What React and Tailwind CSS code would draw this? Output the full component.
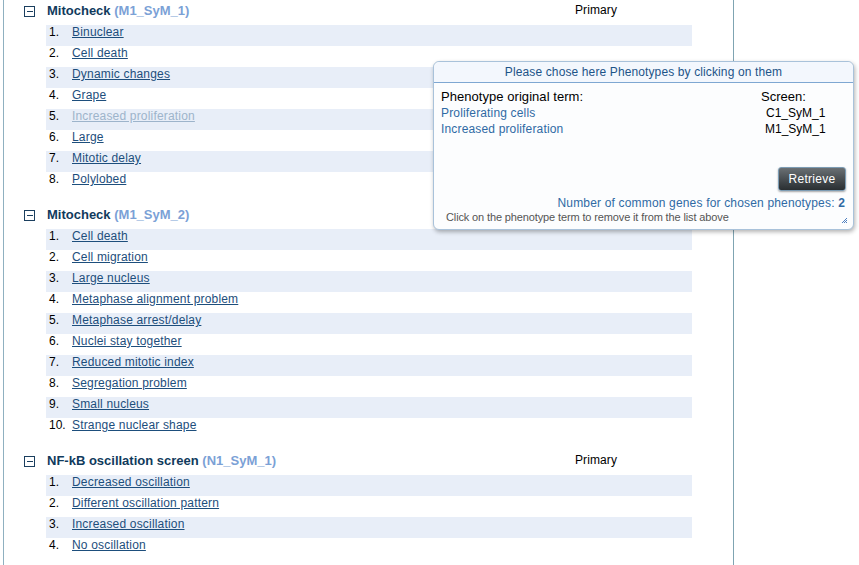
import React from "react";

const sections = [
  {
    title: "Mitocheck",
    code: "M1_SyM_1",
    primary: true,
    items: ["Binuclear", "Cell death", "Dynamic changes", "Grape", "Increased proliferation", "Large", "Mitotic delay", "Polylobed"],
    chosen: ["Increased proliferation"],
  },
  {
    title: "Mitocheck",
    code: "M1_SyM_2",
    primary: false,
    items: [
      "Cell death",
      "Cell migration",
      "Large nucleus",
      "Metaphase alignment problem",
      "Metaphase arrest/delay",
      "Nuclei stay together",
      "Reduced mitotic index",
      "Segregation problem",
      "Small nucleus",
      "Strange nuclear shape",
    ],
    chosen: [],
  },
  {
    title: "NF-kB oscillation screen",
    code: "N1_SyM_1",
    primary: true,
    items: ["Decreased oscillation", "Different oscillation pattern", "Increased oscillation", "No oscillation"],
    chosen: [],
  },
];

function Section({ section }) {
  return (
    <div className="mb-[11px]">
      <div className="flex h-[25px] pl-[20px]">
        <div className="mt-[6px] flex h-[11px] w-[11px] items-center justify-center border border-[#1b3f5f]">
          <div className="h-px w-[6px] bg-[#1b3f5f]" />
        </div>
        <div className="ml-[12px] w-[528px] pt-[4px] text-[13px] font-bold leading-[14px] text-[#103a5c]">
          {section.title} <span className="text-[#7ba1d6]">({section.code})</span>
        </div>
        {section.primary && <div className="pt-[4px] leading-[13px] tracking-[0.1px] text-black">Primary</div>}
      </div>
      <div className="ml-[42px] w-[646px]">
        {section.items.map((item, i) => (
          <div key={i} className={"flex h-[21px] leading-[14px] " + (i % 2 === 0 ? "bg-[#e8eef8]" : "")}>
            <span className="w-[26px] pl-[3px] text-black">{i + 1}.</span>
            <a
              href="#"
              className={
                "tracking-[0.18px] underline " +
                (section.chosen.includes(item) ? "text-[#9db4cb]" : "text-[#1d4e7c]")
              }
            >
              {item}
            </a>
          </div>
        ))}
      </div>
    </div>
  );
}

function Chooser() {
  return (
    <div className="absolute left-[433px] top-[61px] flex h-[169px] w-[421px] flex-col rounded-[6px] border border-[#a9c2da] bg-[#fcfdfe] shadow-[1px_2px_4px_rgba(0,0,0,0.3)]">
      <div className="flex h-[21px] items-center justify-center rounded-t-[6px] border-b border-[#7ea7d2] bg-[#f3f7fd] tracking-[0.12px] text-[#1d5488]">
        Please chose here Phenotypes by clicking on them
      </div>
      <div className="flex pl-[7px] pr-[29px] pt-[6px] leading-[16px]">
        <div className="flex-1">
          <div className="text-[13px] tracking-[0.05px] text-black">Phenotype original term:</div>
          <div className="tracking-[0.16px] text-[#2f6aa4]">Proliferating cells</div>
          <div className="tracking-[0.16px] text-[#2f6aa4]">Increased proliferation</div>
        </div>
        <div className="w-[63px] text-black">
          <div className="text-[13px]">Screen:</div>
          <div className="pl-[5px]">C1_SyM_1</div>
          <div className="pl-[4px]">M1_SyM_1</div>
        </div>
      </div>
      <button className="mr-[7px] mt-[30px] h-[24px] w-[68px] self-end rounded-[3px] border border-[#7c9cb4] bg-gradient-to-b from-[#6a7074] to-[#2a2f32] text-[12px] tracking-[0.3px] text-white shadow-[0_1px_2px_rgba(0,0,0,0.35)]">
        Retrieve
      </button>
      <div className="mt-[5px] pr-[8px] text-right leading-[14px] tracking-[0.17px] text-[#2f6aa4]">
        Number of common genes for chosen phenotypes: <span className="font-bold">2</span>
      </div>
      <div className="relative mt-[1px] pl-[12px] text-[11px] leading-[12px] tracking-[-0.13px] text-[#555]">
        Click on the phenotype term to remove it from the list above
        <svg className="absolute bottom-[-1px] right-[5px]" width="7" height="7" viewBox="0 0 7 7">
          <path d="M6 1 L1 6 M6 3 L3 6 M6 5 L5 6" stroke="#4d7fc0" strokeWidth="1" />
        </svg>
      </div>
    </div>
  );
}

export default function App() {
  return (
    <div className="relative h-[565px] w-[859px] overflow-hidden bg-white font-['Liberation_Sans',Arial,sans-serif] text-[12px]">
      <div className="ml-[3px] h-[565px] w-[731px] border-l border-r border-l-[#8fb0c0] border-r-[#7fa4b2]">
        {sections.map((s, i) => (
          <Section key={i} section={s} />
        ))}
      </div>
      <Chooser />
    </div>
  );
}
